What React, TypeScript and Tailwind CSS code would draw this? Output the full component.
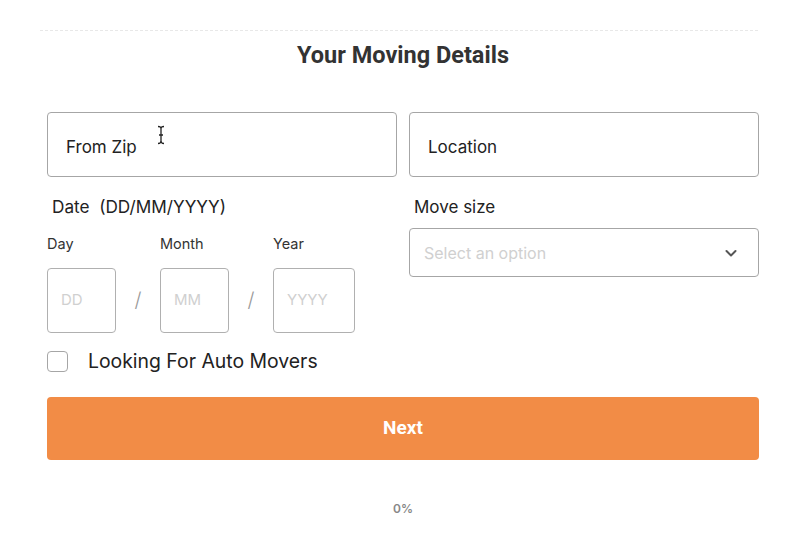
import React from "react";

export default function App() {
  return (
    <div className="w-[800px] h-[536px] bg-white relative" style={{ fontFamily: "Inter, 'Noto Sans', sans-serif" }}>
      <div className="pt-[30px] px-[40px]">
        <div className="border-t border-dashed border-[#e8e8e8] w-[718px]" />
      </div>
      <h1 className="text-center text-[23.5px] font-bold text-[#333] mt-[9px] leading-[30px] ml-[6px]" style={{ fontFamily: "Roboto, Inter, sans-serif" }}>
        Your Moving Details
      </h1>
      <div className="ml-[47px] w-[712px] mt-[42px]">
        <div className="grid grid-cols-2 gap-[12px]">
          <div className="h-[65px] border border-[#a6a6a6] rounded-[4px] flex items-center pl-[18px] pt-[6px] text-[17px] text-[#222] relative">
            From Zip
            <svg className="absolute left-[108px] top-[12px]" width="10" height="20" viewBox="0 0 10 20">
              <path d="M2 1.5 Q5 1.5 5 4 L5 16 Q5 18.5 2 18.5 M8 1.5 Q5 1.5 5 4 M5 16 Q5 18.5 8 18.5 M3 10 H7" stroke="#222" strokeWidth="1.3" fill="none" />
            </svg>
          </div>
          <div className="h-[65px] border border-[#a6a6a6] rounded-[4px] flex items-center pl-[18px] pt-[6px] text-[17px] text-[#222]">
            Location
          </div>
        </div>
        <div className="grid grid-cols-2 gap-[12px] mt-[18px]">
          <div>
            <div className="text-[17.2px] text-[#222] pl-[5px] leading-[24px]">Date&nbsp; (DD/MM/YYYY)</div>
            <div className="flex mt-[15px]">
              <div className="w-[69px]">
                <div className="text-[14.5px] text-[#333] leading-[20px]">Day</div>
                <div className="mt-[14px] h-[65px] border border-[#b0b0b0] rounded-[4px] flex items-center pl-[13px] text-[15px] text-[#d0d0d0]">DD</div>
              </div>
              <div className="w-[44px] flex items-end justify-center pb-[18px] text-[20px] text-[#999] font-light">/</div>
              <div className="w-[69px]">
                <div className="text-[14.5px] text-[#333] leading-[20px]">Month</div>
                <div className="mt-[14px] h-[65px] border border-[#b0b0b0] rounded-[4px] flex items-center pl-[13px] text-[15px] text-[#d0d0d0]">MM</div>
              </div>
              <div className="w-[44px] flex items-end justify-center pb-[18px] text-[20px] text-[#999] font-light">/</div>
              <div className="w-[82px]">
                <div className="text-[14.5px] text-[#333] leading-[20px]">Year</div>
                <div className="mt-[14px] h-[65px] border border-[#b0b0b0] rounded-[4px] flex items-center pl-[13px] text-[15px] text-[#d0d0d0]">YYYY</div>
              </div>
            </div>
          </div>
          <div>
            <div className="text-[17px] text-[#222] pl-[5px] leading-[24px]">Move size</div>
            <div className="mt-[9px] h-[49px] border border-[#a6a6a6] rounded-[4px] flex items-center justify-between pl-[14px] pr-[20px]">
              <span className="text-[16px] text-[#d0d0d0]">Select an option</span>
              <svg width="14" height="14" viewBox="0 0 14 14">
                <path d="M2.5 5 L7 9.5 L11.5 5" stroke="#555" strokeWidth="2" fill="none" strokeLinecap="round" strokeLinejoin="round" />
              </svg>
            </div>
          </div>
        </div>
        <div className="flex items-center mt-[15px]">
          <div className="w-[21px] h-[21px] border border-[#a6a6a6] rounded-[4px]" />
          <span className="ml-[20px] text-[19.4px] text-[#222] leading-[26px]">Looking For Auto Movers</span>
        </div>
        <button className="mt-[23px] w-full h-[63px] bg-[#f28c46] rounded-[4px] text-white text-[19px] font-bold" style={{ fontFamily: "Roboto, Inter, sans-serif" }}>
          Next
        </button>
        <div className="text-center mt-[40px] text-[12px] font-semibold text-[#888]">0%</div>
      </div>
    </div>
  );
}
